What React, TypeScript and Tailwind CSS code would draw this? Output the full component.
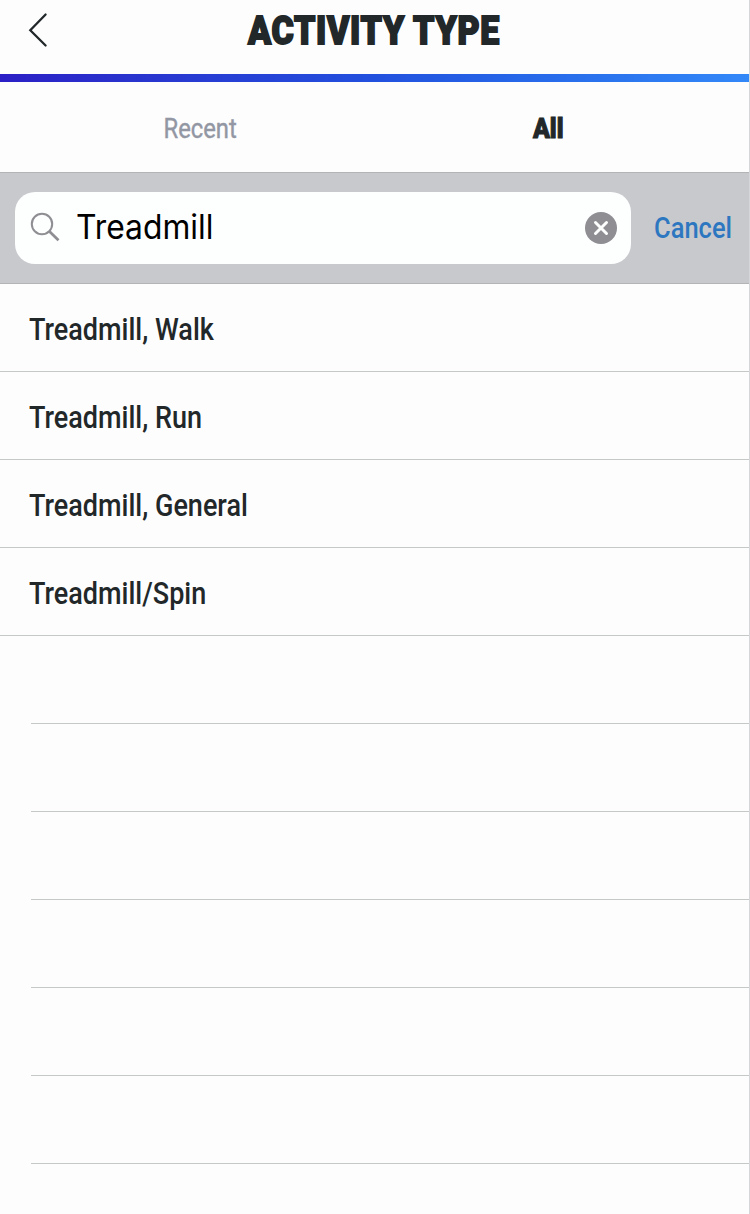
const activities = ['Treadmill, Walk', 'Treadmill, Run', 'Treadmill, General', 'Treadmill/Spin']

const emptyRows = [1, 2, 3, 4, 5, 6]

function Header() {
  return (
    <header className="relative flex h-[74px] items-start justify-center">
      <button aria-label="Back" className="absolute left-7 top-3">
        <svg className="h-9 w-5" viewBox="0 0 20 36" fill="none" stroke="#222829" strokeWidth={2.3} strokeLinecap="round">
          <path d="M17.6 2.5L2.3 18.2L17.6 33.5" />
        </svg>
      </button>
      <h1 className="mt-[7px] w-[254px] whitespace-nowrap text-[39px] font-black leading-[48px]">
        <span className="inline-block origin-left scale-x-[0.87] tracking-[0.8px] [-webkit-text-stroke:1.8px_#222829]">ACTIVITY TYPE</span>
      </h1>
    </header>
  )
}

function Tabs() {
  return (
    <nav className="flex h-[90px] items-center text-[28px] leading-8">
      <button className="flex flex-1 justify-center pl-[26px] pt-[3px] text-[#9297a3]">
        <span className="inline-block scale-x-[0.85] [-webkit-text-stroke:0.4px_#9297a3]">Recent</span>
      </button>
      <button className="flex flex-1 justify-center pr-[27px] pt-[3px] font-black">
        <span className="inline-block scale-x-[0.89] [-webkit-text-stroke:1px_#222829]">All</span>
      </button>
    </nav>
  )
}

function SearchBar() {
  return (
    <div className="flex h-[112px] items-center border-y border-[#b3b4b5] bg-[#c8c9cd] pl-[15px]">
      <div className="flex h-[72px] w-[616px] items-center rounded-[20px] bg-[#fdfefe] pl-[15px] pr-[14px]">
        <svg className="mb-[2px] h-[30px] w-[30px]" viewBox="0 0 30 30" fill="none" stroke="#8e8e93" strokeWidth={2}>
          <circle cx="12" cy="12" r="10.2" />
          <path d="M19.5 19.5L28.5 28.2" strokeWidth={2.7} />
        </svg>
        <span className="ml-4 flex-1 pb-[3px] font-['Inter',sans-serif] text-[33.5px] leading-10 text-black">
          <span className="inline-block origin-left scale-x-[0.95]">Treadmill</span>
        </span>
        <button aria-label="Clear" className="flex h-8 w-8 items-center justify-center rounded-full bg-[#8e8e93]">
          <svg className="h-8 w-8" viewBox="0 0 32 32" fill="none" stroke="#fdfefe" strokeWidth={3} strokeLinecap="round">
            <path d="M10.5 10.5L21.5 21.5M21.5 10.5L10.5 21.5" />
          </svg>
        </button>
      </div>
      <button className="ml-[23px] w-[80px] whitespace-nowrap pb-[2px] text-left text-[30px] font-medium text-[#2d77c0]">
        <span className="inline-block origin-left scale-x-[0.85]">Cancel</span>
      </button>
    </div>
  )
}

export default function App() {
  return (
    <div className="h-[1214px] w-[750px] overflow-hidden border-r border-[#d5d6d9] bg-[#fdfdfe] font-['Roboto',sans-serif] text-[#222829]">
      <Header />
      <div className="h-2 bg-gradient-to-r from-[#2b1fc5] via-[#2250de] to-[#3388f8]" />
      <Tabs />
      <SearchBar />
      <ul>
        {activities.map((activity) => (
          <li key={activity} className="flex h-[88px] items-center whitespace-nowrap border-b border-[#c4c8c7] pl-[29px] pt-[2px] text-[32px] font-medium">
            <span className="inline-block origin-left scale-x-[0.844]">{activity}</span>
          </li>
        ))}
        {emptyRows.map((row) => (
          <li key={row} className="ml-[31px] h-[88px] border-b border-[#c4c8c7]" />
        ))}
      </ul>
    </div>
  )
}
